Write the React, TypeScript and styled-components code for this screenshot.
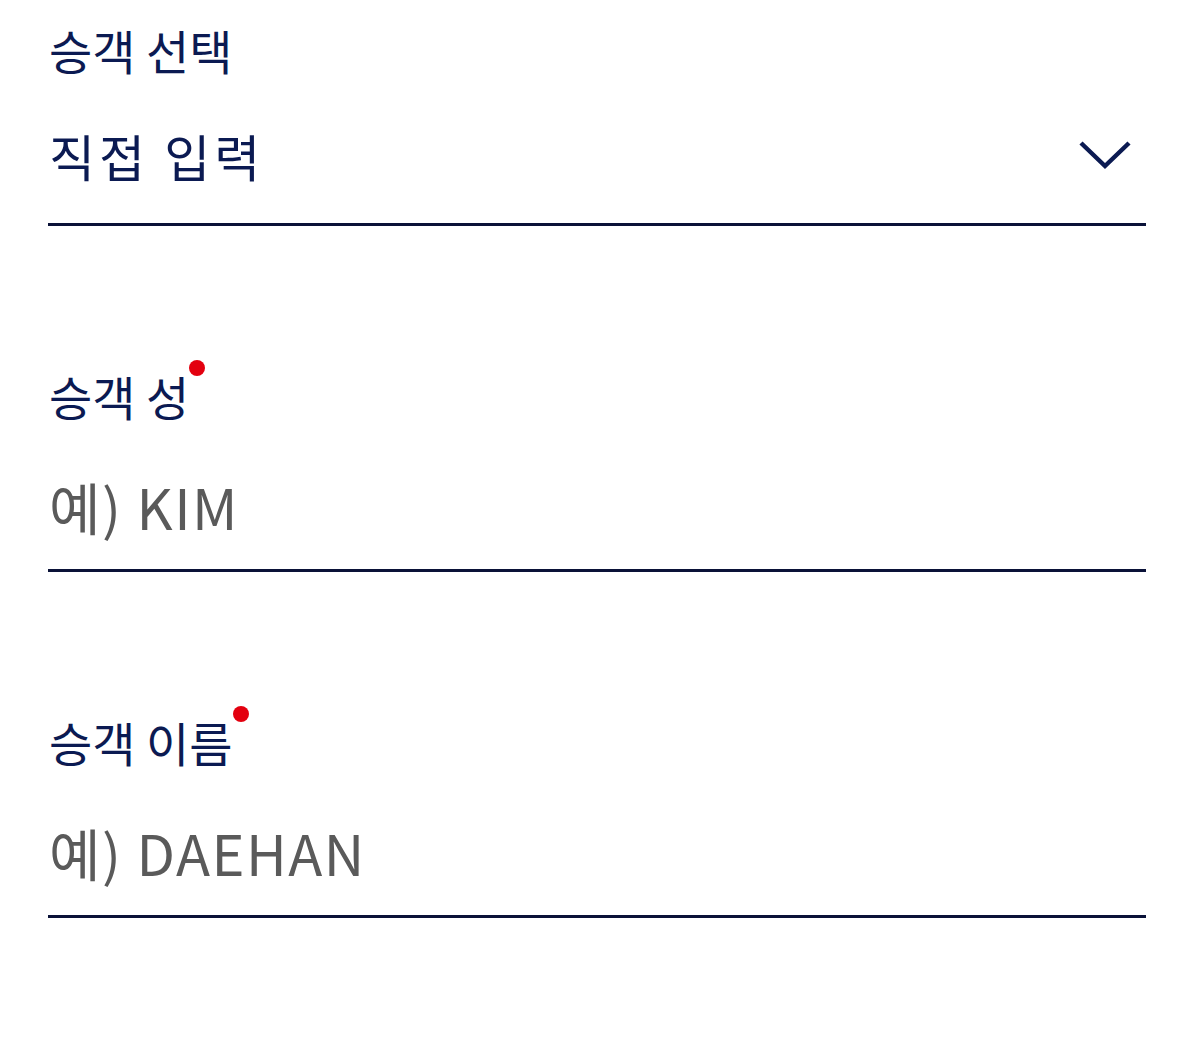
import React from 'react'
import styled, { createGlobalStyle } from 'styled-components'

const GlobalStyle = createGlobalStyle`
  html, body {
    margin: 0;
    padding: 0;
    background: #ffffff;
  }
  body {
    font-family: "Noto Sans CJK KR", "Noto Sans", sans-serif;
  }
`

const NAVY = '#0b1a52'

const Form = styled.div`
  width: 1200px;
  padding: 20px 54px 0 48px;
  box-sizing: border-box;
  display: flex;
  flex-direction: column;
  gap: 140px;
`

const Field = styled.div`
  display: flex;
  flex-direction: column;
`

const Label = styled.div<{ required?: boolean }>`
  position: relative;
  align-self: flex-start;
  height: 60px;
  line-height: 60px;
  padding-left: 1px;
  font-size: 47px;
  color: ${NAVY};
  white-space: nowrap;

  ${({ required }) =>
    required &&
    `
    &::after {
      content: '';
      position: absolute;
      top: -6px;
      left: calc(100% + 0px);
      width: 16px;
      height: 16px;
      border-radius: 50%;
      background: #e3000f;
    }
  `}
`

const InputRow = styled.div`
  height: 146px;
  box-sizing: border-box;
  padding: 7px 15px 0 1px;
  border-bottom: 3px solid #0a1238;
  display: flex;
  align-items: center;
  justify-content: space-between;
`

const Value = styled.span`
  font-size: 50px;
  letter-spacing: 4px;
  color: ${NAVY};
`

const Placeholder = styled.span`
  padding-top: 9px;
  font-size: 56px;
  letter-spacing: 1.5px;
  color: #5a5a5a;
`

const Chevron = () => (
  <svg width="52" height="30" viewBox="0 0 52 30" fill="none">
    <path d="M2 3 L26 26 L50 3" stroke={NAVY} strokeWidth="4.5" strokeLinejoin="miter" />
  </svg>
)

export default function App() {
  return (
    <>
      <GlobalStyle />
      <Form>
        <Field>
          <Label>승객 선택</Label>
          <InputRow>
            <Value>직접 입력</Value>
            <Chevron />
          </InputRow>
        </Field>
        <Field>
          <Label required>승객 성</Label>
          <InputRow>
            <Placeholder>예) KIM</Placeholder>
          </InputRow>
        </Field>
        <Field>
          <Label required>승객 이름</Label>
          <InputRow>
            <Placeholder>예) DAEHAN</Placeholder>
          </InputRow>
        </Field>
      </Form>
    </>
  )
}
